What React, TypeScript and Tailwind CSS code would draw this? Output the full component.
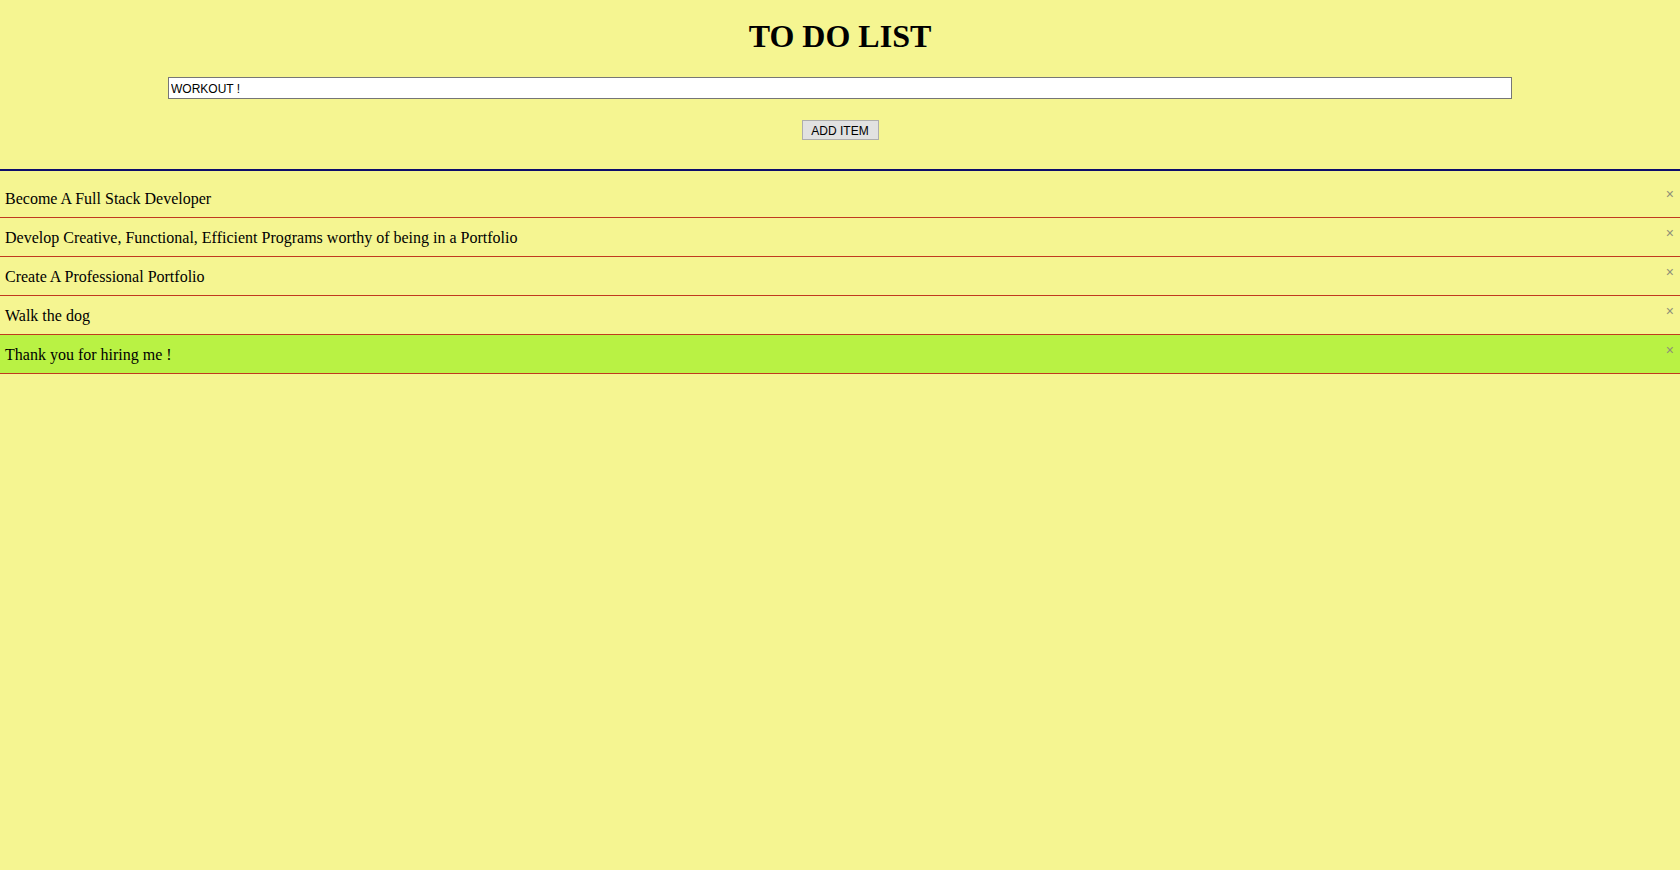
import React from "react";

const items = [
  "Become A Full Stack Developer",
  "Develop Creative, Functional, Efficient Programs worthy of being in a Portfolio",
  "Create A Professional Portfolio",
  "Walk the dog",
  "Thank you for hiring me !",
];

export default function App() {
  return (
    <div
      className="min-h-[870px] bg-[#f5f591] text-black"
      style={{ fontFamily: '"Liberation Serif", "Times New Roman", serif' }}
    >
      <h1 className="text-center text-[32px] font-bold leading-[37px] pt-[18px] m-0">TO DO LIST</h1>
      <div className="flex justify-center mt-[22px]">
        <input
          readOnly
          value="WORKOUT !"
          className="w-[1344px] h-[22px] border border-[#767676] bg-white px-[2px] pt-[1px] text-[12px] text-black outline-none"
          style={{ fontFamily: '"Liberation Sans", Arial, sans-serif' }}
        />
      </div>
      <div className="flex justify-center mt-[21px]">
        <button
          className="w-[77px] h-[20px] border border-[#adadad] bg-[#e1e1e1] text-[12px] leading-none text-black pt-[1px]"
          style={{ fontFamily: '"Liberation Sans", Arial, sans-serif' }}
        >
          ADD ITEM
        </button>
      </div>
      <div className="mt-[29px] h-[2px] bg-[#0d0d6b]" />
      <ul className="mt-[8px] list-none p-0">
        {items.map((t, i) => (
          <li
            key={i}
            className={`flex justify-between h-[39px] border-b border-[#c0391f] pl-[5px] pr-[6px] ${
              i === 4 ? "bg-[#b9f244]" : ""
            }`}
          >
            <span className="self-center text-[16px] leading-none pt-[1px]">{t}</span>
            <span
              className="text-[#8f8f78] text-[14px] leading-none mt-[8px]"
              style={{ fontFamily: '"Liberation Sans", Arial, sans-serif' }}
            >
              ×
            </span>
          </li>
        ))}
      </ul>
    </div>
  );
}
